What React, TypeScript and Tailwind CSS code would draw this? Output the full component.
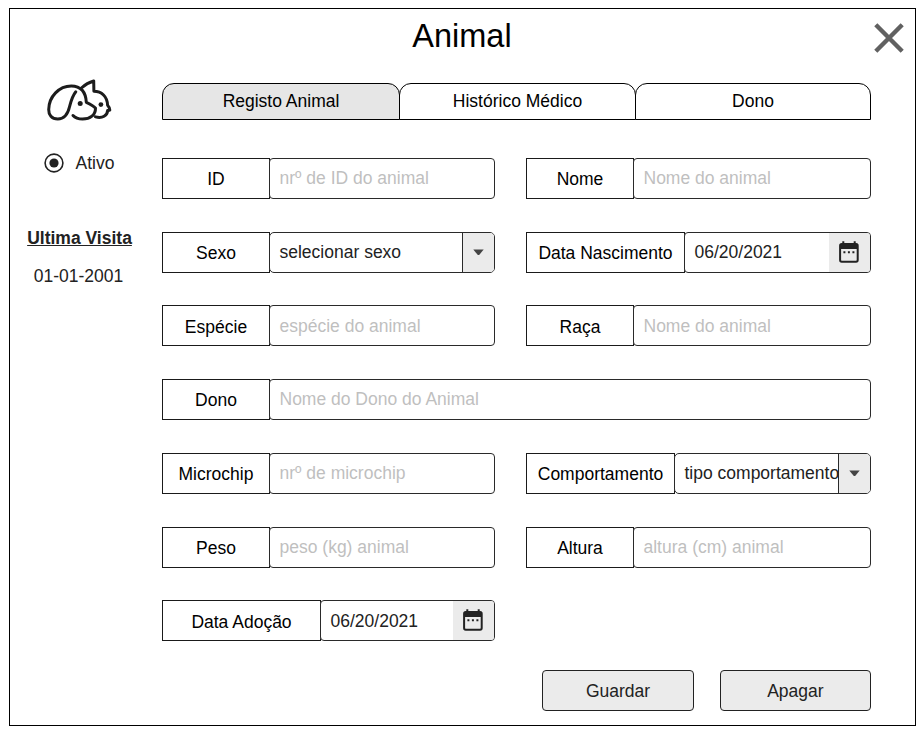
import React from "react";

function Logo() {
  return (
    <svg
      width="70"
      height="48"
      viewBox="0 0 70 48"
      fill="none"
      stroke="#1c1c1c"
      strokeWidth="3"
      strokeLinecap="round"
      strokeLinejoin="round"
      role="img"
      aria-label="logo"
    >
      <path d="M31.8 13.8C28.4 17.8 27.2 22.5 25.6 28.5C23.8 36.5 20.4 41 13.8 41C7.6 41 4.6 37 4.7 31.5C4.9 18.5 15.2 8 27.3 8C36.5 8.2 41.8 14 42.3 24.3C46 26 50 28.1 51.5 30.2C51.6 37 46.2 41.1 38.6 41.1C34 41.1 31 39.8 29 37.5" />
      <path d="M37.4 10C41 6.7 45 4.3 49.7 3L49.9 13.2C57.6 13.2 63.3 18.5 63.6 27.3C65 28.8 65.8 30.3 65.8 32C65.3 32.4 64.2 32.3 63.6 32.5C63.4 37.7 58.5 40.6 51.5 38.9" />
      <circle cx="36.2" cy="25.6" r="2.5" fill="#1c1c1c" stroke="none" />
      <circle cx="56.9" cy="26.6" r="2.4" fill="#1c1c1c" stroke="none" />
    </svg>
  );
}

function CalendarIcon() {
  return (
    <svg width="20" height="22" viewBox="0 0 20 22" fill="none">
      <path d="M4.3 0.3v3M15.7 0.3v3" stroke="#222" strokeWidth="2" />
      <rect x="1.1" y="3.1" width="17.6" height="17.6" rx="1.6" stroke="#222" strokeWidth="2" />
      <path d="M1 3h18v5H1z" fill="#222" />
      <path d="M4.4 10.3h2v2h-2zM8.9 10.3h2v2h-2zM13.4 10.3h2v2h-2z" fill="#222" />
    </svg>
  );
}

type FieldProps = {
  label: string;
  value: string;
  kind?: "text" | "select" | "date";
  labelWidth?: string;
};

function Field({ label, value, kind = "text", labelWidth = "w-[108px]" }: FieldProps) {
  return (
    <div className="flex h-[41px]">
      <div
        className={`${labelWidth} flex shrink-0 items-center justify-center border border-[#1a1a1a] pt-[1.4px] text-black`}
      >
        {label}
      </div>
      <div
        className={`-ml-px flex min-w-0 flex-1 overflow-hidden border border-[#2a2a2a] bg-white ${
          kind === "select" ? "rounded-[5px]" : "rounded"
        }`}
      >
        <div
          className={`flex min-w-0 flex-1 items-center whitespace-nowrap pb-[0.6px] pl-[9.5px] ${
            kind === "text" ? "text-[#bfbfbf]" : "text-[#222]"
          }`}
        >
          {value}
        </div>
        {kind === "select" && (
          <div className="flex w-8 shrink-0 items-center justify-center border-l border-[#2a2a2a] bg-[#ebebeb]">
            <svg width="11" height="7" viewBox="0 0 11 7">
              <path d="M0.3 0.6h10.4L6.6 5.4Q5.5 6.6 4.4 5.4z" fill="#444" />
            </svg>
          </div>
        )}
        {kind === "date" && (
          <div className="flex w-[41px] shrink-0 items-center justify-center bg-[#ebebeb] pb-px pr-0.5">
            <CalendarIcon />
          </div>
        )}
      </div>
    </div>
  );
}

const tabs = ["Registo Animal", "Histórico Médico", "Dono"];

export default function App() {
  return (
    <div className="h-[730px] w-[922px] bg-white pl-[9px] pt-2 font-['Liberation_Sans',Arial,sans-serif] text-[17.5px] leading-5">
      <div className="flex h-[718px] w-[907px] flex-col border border-black">
        <header className="flex h-[74px] items-start justify-between pr-[11px]">
          <div className="w-[30px]" />
          <h1 className="pl-[10px] pt-[8px] text-[32.5px] leading-[38px] text-black">Animal</h1>
          <button className="pt-[14px]" aria-label="Fechar">
            <svg width="30" height="30" viewBox="0 0 30 30">
              <path d="M1.8 1.8L28.2 28.2M28.2 1.8L1.8 28.2" stroke="#616161" strokeWidth="4.4" />
            </svg>
          </button>
        </header>

        <div className="flex">
          <aside className="flex w-[152px] flex-col pr-3 text-[#222]">
            <div className="-mt-[5px] ml-[34px]">
              <Logo />
            </div>
            <div className="ml-[34px] mt-[27px] flex items-center gap-[11.5px]">
              <svg width="20" height="20" viewBox="0 0 20 20">
                <circle cx="10" cy="10" r="8.9" fill="white" stroke="#222" strokeWidth="1.6" />
                <circle cx="10" cy="10" r="4.6" fill="#222" />
              </svg>
              <span>Ativo</span>
            </div>
            <div className="mt-[55px] pr-px text-center font-bold underline">Ultima Visita</div>
            <div className="mt-[18px] pr-[3px] text-center">01-01-2001</div>
          </aside>

          <main className="w-[709px]">
            <nav className="grid h-[37px] grid-cols-[238px_236px_235px]">
              {tabs.map((tab, i) => (
                <div
                  key={tab}
                  className={`flex items-center justify-center rounded-t-xl border border-black pb-px text-black ${
                    i === 0 ? "bg-[#e6e6e6]" : "-ml-px bg-white"
                  }`}
                >
                  {tab}
                </div>
              ))}
            </nav>

            <div className="mt-[37.85px] grid grid-cols-[333px_345px] gap-x-[31px] gap-y-[32.75px]">
              <Field label="ID" value="nrº de ID do animal" />
              <Field label="Nome" value="Nome do animal" />
              <Field label="Sexo" value="selecionar sexo" kind="select" />
              <Field label="Data Nascimento" value="06/20/2021" kind="date" labelWidth="w-[159px]" />
              <Field label="Espécie" value="espécie do animal" />
              <Field label="Raça" value="Nome do animal" />
              <div className="col-span-2">
                <Field label="Dono" value="Nome do Dono do Animal" />
              </div>
              <Field label="Microchip" value="nrº de microchip" />
              <Field
                label="Comportamento"
                value="tipo comportamento"
                kind="select"
                labelWidth="w-[149px]"
              />
              <Field label="Peso" value="peso (kg) animal" />
              <Field label="Altura" value="altura (cm) animal" />
              <Field label="Data Adoção" value="06/20/2021" kind="date" labelWidth="w-[159px]" />
            </div>

            <div className="mt-[28.7px] flex justify-end gap-[26px] text-[#222]">
              {["Guardar", "Apagar"].map((action) => (
                <button
                  key={action}
                  className="h-[41px] w-[151.3px] rounded border border-[#222] bg-[#ebebeb] pt-px"
                >
                  {action}
                </button>
              ))}
            </div>
          </main>
        </div>
      </div>
    </div>
  );
}
